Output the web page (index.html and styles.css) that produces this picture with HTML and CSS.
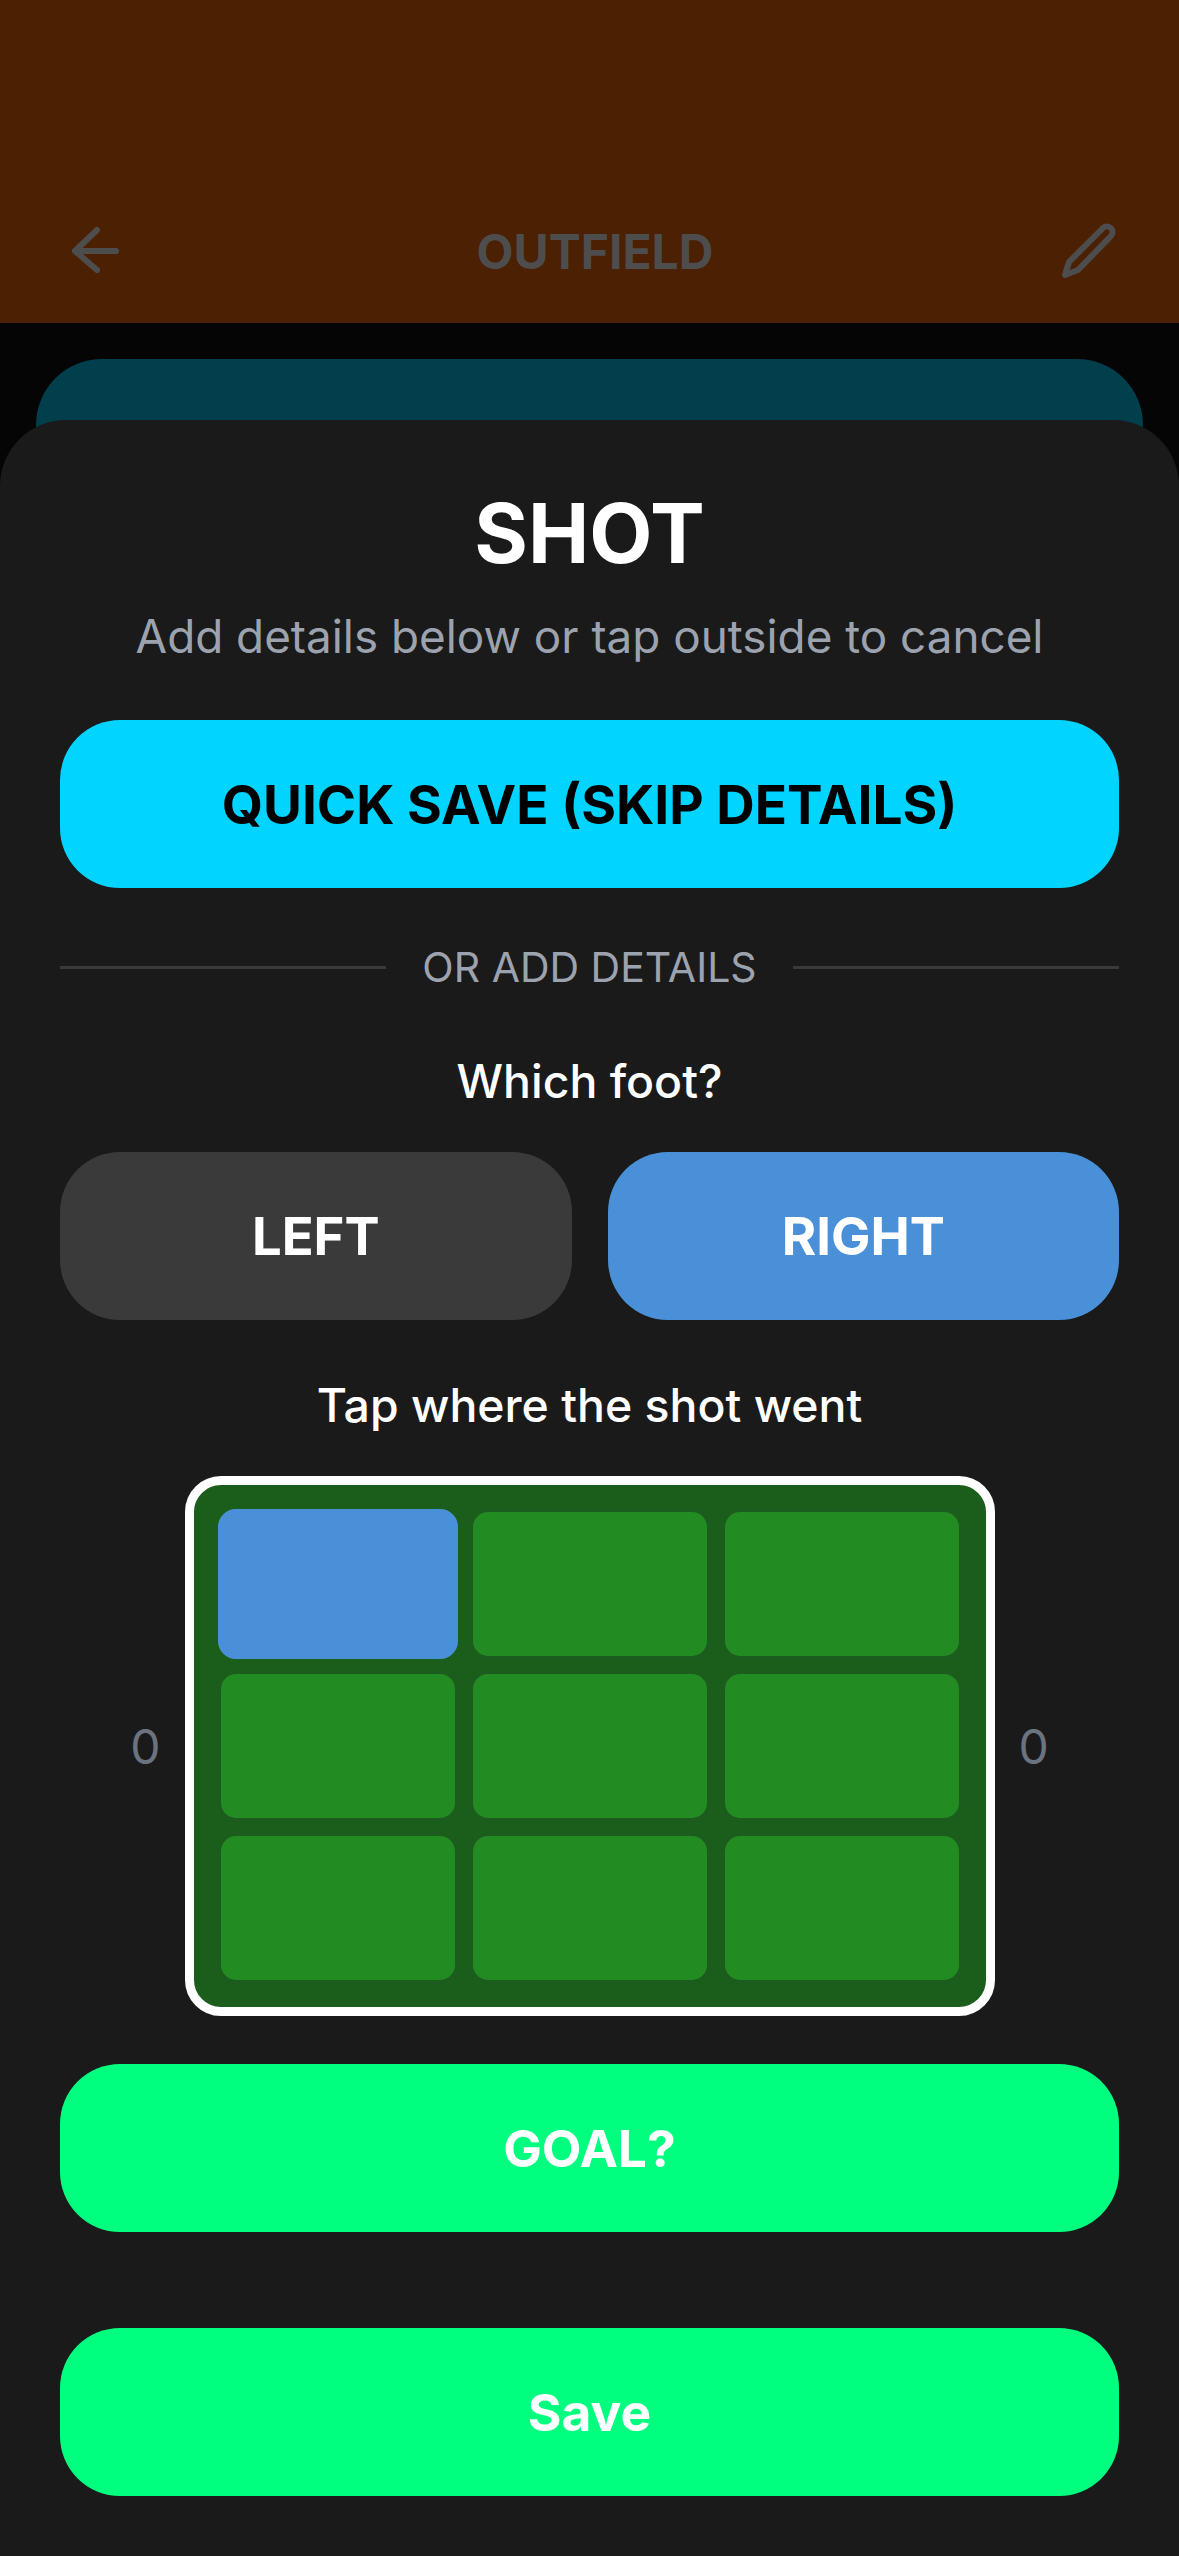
FILE: index.html
```html
<!DOCTYPE html>
<html lang="en">
<head>
  <meta charset="UTF-8" />
  <meta name="viewport" content="width=device-width, initial-scale=1.0" />
  <title>Outfield - Shot</title>
  <link rel="stylesheet" href="styles.css">
</head>
<body>
  <header class="top-bar">
    <svg class="icon" width="60" height="60" viewBox="0 0 60 60">
      <path d="M53 30H12M34 9L12 30L34 49" />
    </svg>
    <span class="top-title">OUTFIELD</span>
    <svg class="icon" width="60" height="60" viewBox="0 0 60 60">
      <path d="M6 54L10 41L44 7A5.66 5.66 0 0 1 52 15L19 49Z" />
    </svg>
  </header>
  <div class="back-card"></div>

  <section class="sheet">
    <h1 class="sheet-title">SHOT</h1>
    <p class="sheet-sub">Add details below or tap outside to cancel</p>

    <button class="btn btn-quick">QUICK SAVE (SKIP DETAILS)</button>

    <div class="divider">
      <span class="divider-line"></span>
      <span class="divider-text">OR ADD DETAILS</span>
      <span class="divider-line"></span>
    </div>

    <p class="label label-foot">Which foot?</p>
    <div class="foot-row">
      <button class="btn btn-left">LEFT</button>
      <button class="btn btn-right">RIGHT</button>
    </div>

    <p class="label label-zone">Tap where the shot went</p>
    <div class="zone-row">
      <span class="zone-count">0</span>
      <div class="goal-box">
        <div class="zone zone-active"></div>
        <div class="zone"></div>
        <div class="zone"></div>
        <div class="zone"></div>
        <div class="zone"></div>
        <div class="zone"></div>
        <div class="zone"></div>
        <div class="zone"></div>
        <div class="zone"></div>
      </div>
      <span class="zone-count">0</span>
    </div>

    <button class="btn btn-goal">GOAL?</button>
    <button class="btn btn-save">Save</button>
  </section>
</body>
</html>
```

FILE: styles.css
```css
/* Page behind the sheet, already dimmed */
* {
  box-sizing: border-box;
}

body {
  margin: 0;
  height: 2556px;
  position: relative;
  overflow: hidden;
  background-color: #050505;
  font-family: Inter, "Noto Sans", sans-serif;
}

.top-bar {
  height: 323px;
  padding: 179px 60px 0 63px;
  display: flex;
  align-items: center;
  justify-content: space-between;
  background-color: #4b2003;
}

.top-title {
  margin-left: 8px;
  font-size: 48px;
  font-weight: 700;
  color: #4d4d4d;
}

.icon {
  fill: none;
  stroke: #4d4d4d;
  stroke-width: 6;
  stroke-linecap: round;
  stroke-linejoin: round;
}

.back-card {
  height: 200px;
  margin: 36px 36px 0;
  border-radius: 66px;
  background-color: #003f4b;
}

/* Bottom sheet */
.sheet {
  position: absolute;
  top: 420px;
  left: 0;
  right: 0;
  bottom: 0;
  padding: 64px 60px 0;
  border-radius: 66px 66px 0 0;
  background-color: #1a1a1a;
}

.sheet-title {
  margin: 0;
  font-size: 82px;
  line-height: 100px;
  font-weight: 700;
  text-align: center;
  color: #fff;
}

.sheet-sub {
  margin: 23px 0 0;
  font-size: 45.8px;
  line-height: 60px;
  text-align: center;
  color: #9ca3af;
}

/* Buttons */
.btn {
  display: block;
  width: 100%;
  height: 168px;
  padding: 0;
  border: none;
  border-radius: 60px;
  font-family: inherit;
  font-size: 52.6px;
  font-weight: 700;
  color: #fff;
}

.btn-quick {
  margin-top: 53px;
  font-size: 53.2px;
  background-color: #00d4ff;
  color: #000;
}

.btn-left {
  background-color: #3a3a3a;
}

.btn-right {
  background-color: #4a90d9;
}

.btn-goal {
  margin-top: 48px;
  font-size: 51.5px;
  background-color: #00ff7f;
}

.btn-save {
  margin-top: 96px;
  font-size: 51.5px;
  background-color: #00ff7f;
}

/* Divider */
.divider {
  height: 60px;
  margin-top: 49px;
  display: flex;
  align-items: center;
  gap: 36px;
}

.divider-line {
  flex: 1;
  height: 3px;
  background-color: #3a3a3a;
}

.divider-text {
  font-size: 41px;
  line-height: 60px;
  color: #9ca3af;
}

/* Foot picker */
.label {
  margin: 0;
  font-size: 46.4px;
  line-height: 60px;
  font-weight: 500;
  text-align: center;
  color: #fff;
}

.label-foot {
  margin-top: 54px;
}

.foot-row {
  margin-top: 41px;
  display: flex;
  gap: 36px;
}

/* Goal grid */
.label-zone {
  margin-top: 55px;
}

.zone-row {
  margin-top: 41px;
  display: flex;
  align-items: center;
  justify-content: center;
  gap: 24px;
}

.zone-count {
  font-size: 48px;
  color: #6b7280;
}

.goal-box {
  width: 810px;
  height: 540px;
  padding: 24px;
  display: grid;
  grid-template-columns: repeat(3, 1fr);
  grid-template-rows: repeat(3, 1fr);
  gap: 12px;
  border: 9px solid #fff;
  border-radius: 36px;
  background-color: #1b5e1b;
}

.zone {
  border: 3px solid #1c5c1e;
  border-radius: 18px;
  background-color: #228b22;
}

.zone-active {
  border-color: #4a90d9;
  background-color: #4a90d9;
}
```
